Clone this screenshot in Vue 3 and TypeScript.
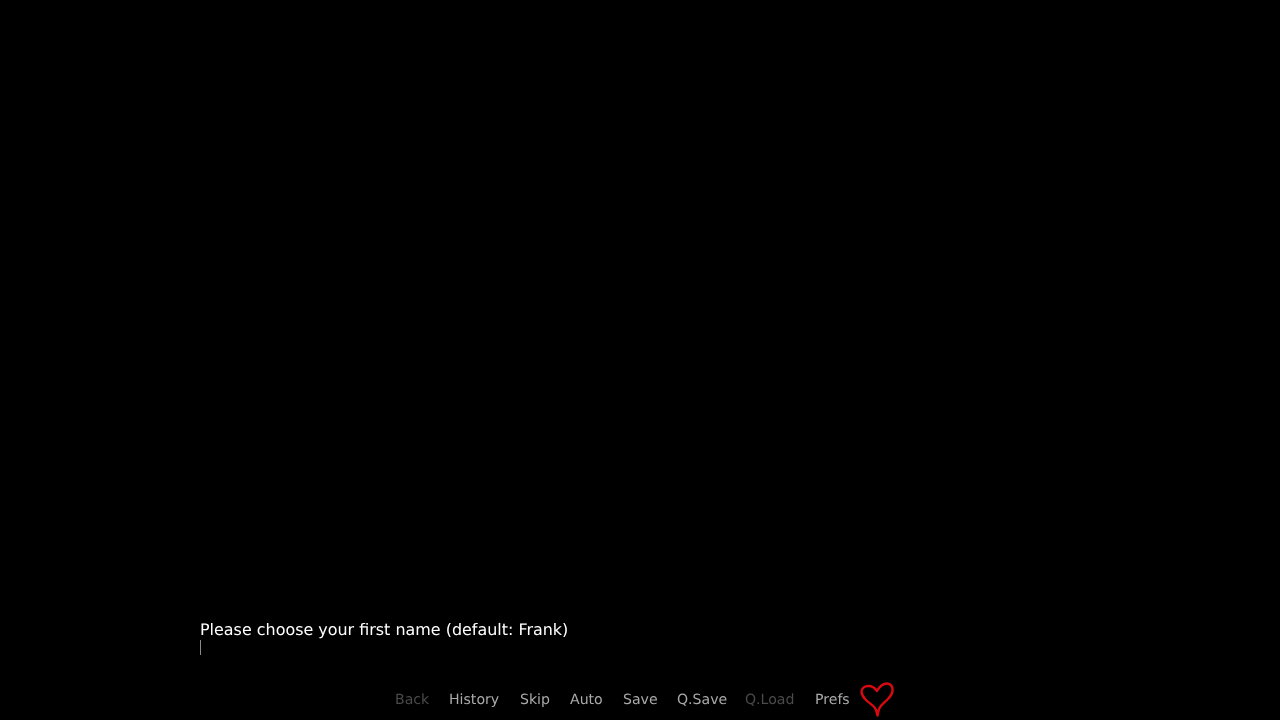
<script setup lang="ts">
interface QuickItem {
  label: string;
  width: number;
  disabled?: boolean;
}

const items: QuickItem[] = [
  { label: 'Back', width: 34, disabled: true },
  { label: 'History', width: 51 },
  { label: 'Skip', width: 30 },
  { label: 'Auto', width: 33 },
  { label: 'Save', width: 34 },
  { label: 'Q.Save', width: 48 },
  { label: 'Q.Load', width: 50, disabled: true },
  { label: 'Prefs', width: 35 },
];
</script>

<template>
  <div class="screen">
    <div class="prompt">
      <div class="prompt-text">Please choose your first name (default: Frank)</div>
      <div class="caret"></div>
    </div>
    <div class="quick-menu">
      <span
        v-for="item in items"
        :key="item.label"
        class="quick-item"
        :class="{ disabled: item.disabled }"
        :style="{ width: item.width + 'px' }"
      >{{ item.label }}</span>
      <svg class="heart" width="36" height="36" viewBox="0 0 36 36" fill="none">
        <path
          d="M18.5 34.5 C18 31.5 17.5 29 16 27 C14 24 10 22 7 19 C5 17 3 15 2.5 11 C2.5 7 6 5 9.5 5 C13 5 16 7 18 10 C20 6.5 24 2.5 28 2.5 C32 2.5 34 6 33.5 10 C33 14 31 16 28 19 C25 22 22 24 20.5 27 C19.5 29 19 31.5 18.5 34.5 Z"
          stroke="#d80a10"
          stroke-width="2.4"
          stroke-linejoin="round"
        />
      </svg>
    </div>
  </div>
</template>

<style>
html,
body {
  background: #000;
}
</style>

<style scoped>
.screen {
  width: 1280px;
  height: 720px;
  background: #000;
  display: flex;
  flex-direction: column;
  justify-content: flex-end;
  overflow: hidden;
  font-family: "DejaVu Sans", sans-serif;
  text-rendering: geometricPrecision;
}

.prompt {
  padding-left: 200px;
  margin-bottom: 26px;
  filter: blur(0.25px);
}

.prompt-text {
  color: #fff;
  font-size: 15.95px;
  line-height: 19px;
}

.caret {
  width: 1px;
  height: 15px;
  margin-top: 1px;
  background: #8a8a8a;
}

.quick-menu {
  display: flex;
  align-items: center;
  height: 36px;
  margin-bottom: 3px;
  padding-left: 395px;
  gap: 20px;
  filter: blur(0.25px);
}

.quick-item {
  color: #aaa;
  font-size: 14.1px;
  line-height: 17px;
  margin-top: 2px;
  white-space: nowrap;
  flex: none;
}

.quick-item.disabled {
  color: #4a4a4a;
}

.heart {
  margin-left: -11px;
  flex: none;
}
</style>
